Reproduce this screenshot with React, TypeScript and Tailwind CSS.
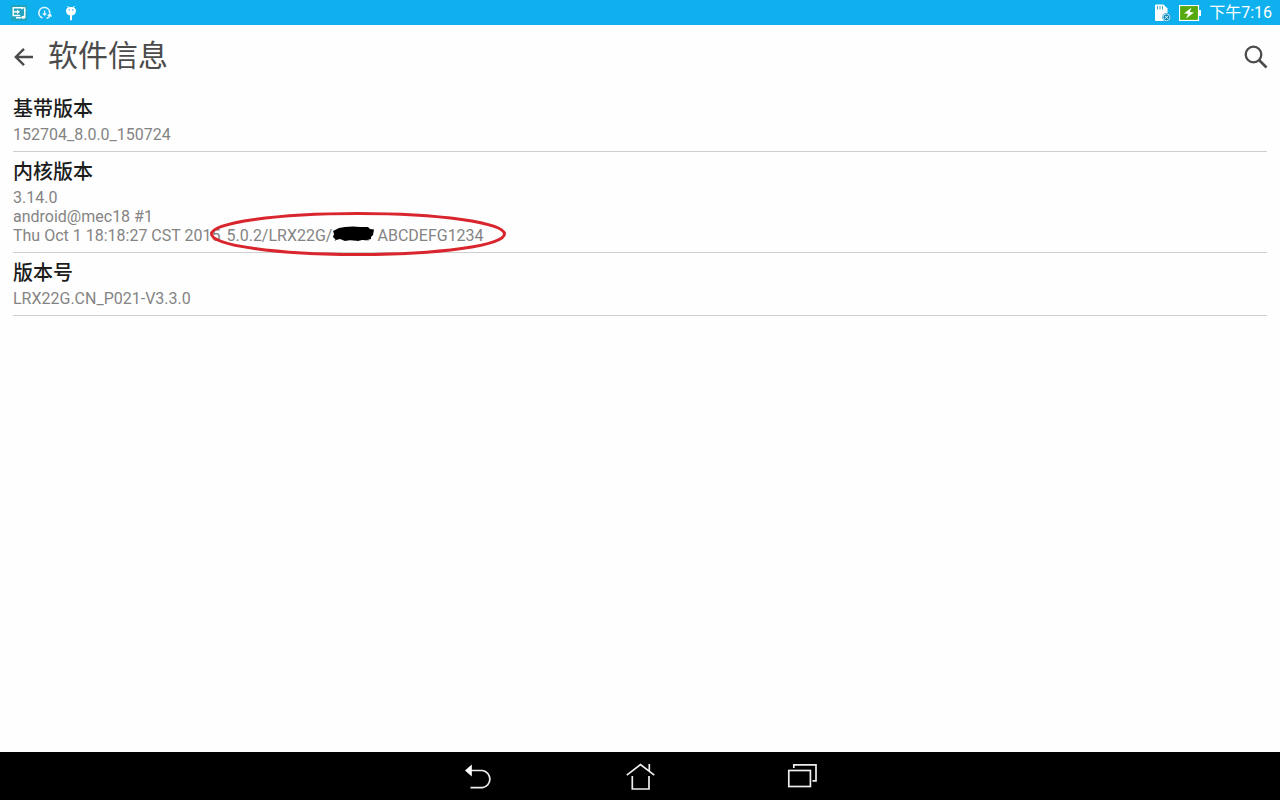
import React from 'react';

type InfoRowProps = { title: string; children: React.ReactNode };

function InfoRow({ title, children }: InfoRowProps) {
  return (
    <li className="border-b border-[#cfcfcf] py-[7px]">
      <h2 className="mb-[3px] text-[20px] leading-[26px] font-medium text-[#1c1c1c]">{title}</h2>
      <div className="text-base leading-[19px] text-[#848484]">{children}</div>
    </li>
  );
}

function StatusBar() {
  return (
    <div className="flex h-[25px] items-center justify-between bg-[#0eb0ee] pr-2 pl-[11px] text-white">
      <div className="flex items-center gap-2.5">
        <svg width="16" height="16" viewBox="0 0 16 16" fill="none" aria-hidden="true">
          <rect width="16" height="16" rx="1.5" fill="#20a4be" />
          <path d="M11 4.2V2.8H2.2V10.5H9.2M5 12.8H10M13.8 4.8V12" stroke="#fff" strokeWidth="1.4" />
          <path d="M11 2.8H13.8V6" stroke="#fff" strokeWidth="1.3" />
          <path d="M2.6 6.8H7" stroke="#fff" strokeWidth="1.5" />
          <path d="M6 4.4L9 6.8L6 9.2Z" fill="#fff" />
          <ellipse cx="12.3" cy="12.3" rx="2" ry="1.5" fill="#fff" />
        </svg>
        <svg width="16" height="16" viewBox="0 0 16 16" fill="none" stroke="#e4f6fe" aria-hidden="true">
          <path d="M5.5 13A5.4 5.4 0 1 1 12.7 8.3" strokeWidth="1.6" />
          <path d="M7.6 5.4V10M5.8 8.3L7.6 10.2L9.4 8.3" strokeWidth="1.2" />
          <path d="M9.5 13.2A4 4 0 0 0 13 9.8M10.7 10.8L13 9L14.5 11.6" strokeWidth="1.4" />
        </svg>
        <svg width="16" height="16" viewBox="0 0 16 16" fill="#fff" aria-hidden="true">
          <path d="M3 5.5C3 3.5 5 2 8 2S13 3.5 13 5.5C13 8.7 11 10.5 8 10.5S3 8.7 3 5.5Z" />
          <path d="M4.5 1L6 3M11.5 1L10 3" stroke="#fff" strokeWidth="1" />
          <path d="M7 10H9V15.2H7Z" />
          <circle cx="6.2" cy="5" r="0.7" fill="#0eb0ee" />
          <circle cx="9.8" cy="5" r="0.7" fill="#0eb0ee" />
        </svg>
      </div>
      <div className="flex items-center gap-2">
        <svg width="16" height="18" viewBox="0 0 16 18" fill="none" aria-hidden="true">
          <path d="M0 1.5Q0 0.5 1 0.5H8.5L12.5 4.5V16.5Q12.5 17 12 17H1Q0 17 0 16Z" fill="#fff" />
          <path d="M2.5 2V5.5M5 2V5.5M7.5 2V5.5" stroke="#3babce" strokeWidth="1" />
          <circle cx="11.5" cy="13.3" r="4.2" fill="#0788bb" />
          <circle cx="11.5" cy="13.3" r="3.5" stroke="#c9edfb" />
          <path d="M10 11.8L13 14.8M13 11.8L10 14.8" stroke="#fff" />
        </svg>
        <svg width="22" height="16" viewBox="0 0 22 16" fill="none" aria-hidden="true">
          <rect x="0.5" y="0.5" width="19" height="15" fill="#56a80f" stroke="#fff" strokeWidth="1.2" />
          <path d="M20 5H22V11H20Z" fill="#fff" />
          <path d="M12.5 2.5L5 8.6L9.2 8.8L7 13.5L15 7.4L10.8 7.1Z" fill="#fff" />
        </svg>
        <time className="text-base leading-6">下午7:16</time>
      </div>
    </div>
  );
}

function HighlightedBuild() {
  return (
    <span className="relative inline-block">
      5.0.2/LRX22G/
      <svg className="inline-block align-bottom" width="45" height="19" viewBox="0 0 45 19" aria-label="已涂抹">
        <path d="M3 15L5 11M18 14H23M32 14H37" stroke="#777" strokeWidth="1" />
        <path d="M1 5L7 2L13 1L21 0.5L28 1L36 1L38 3L42 3.5L41 9L39 11L39 13L35 14L30 14L26 15L19 14L13 15L8 13L4 14L1 11L2 8Z" fill="#000" />
      </svg>
      ABCDEFG1234
      <svg
        className="pointer-events-none absolute -top-3.5 -left-4"
        width="296"
        height="44"
        viewBox="0 0 296 44"
        fill="none"
        aria-hidden="true"
      >
        <ellipse cx="148" cy="22" rx="146.5" ry="20.5" stroke="#d9252d" strokeWidth="3" />
      </svg>
    </span>
  );
}

export default function App() {
  return (
    <div className="flex min-h-screen flex-col bg-[#fefefe] font-[Roboto,'Noto_Sans_CJK_SC',sans-serif]">
      <StatusBar />
      <header className="flex h-16 items-center px-3">
        <button type="button" aria-label="返回" className="mr-3">
          <svg width="24" height="24" viewBox="0 0 24 24" fill="none" stroke="#4b4b4b" strokeWidth="2.4">
            <path d="M21 12H4M12 3.8L3.8 12L12 20.2" />
          </svg>
        </button>
        <h1 className="pb-0.5 text-[30px] leading-10 text-[#4b4b4b]">软件信息</h1>
        <button type="button" aria-label="搜索" className="ml-auto">
          <svg width="24" height="24" viewBox="0 0 24 24" fill="none" stroke="#4b4b4b">
            <circle cx="9.5" cy="9.5" r="7.8" strokeWidth="2.3" />
            <path d="M15 15L22.5 22.5" strokeWidth="2.6" />
          </svg>
        </button>
      </header>
      <main className="flex-1 px-[13px]">
        <ul>
          <InfoRow title="基带版本">
            <p>152704_8.0.0_150724</p>
          </InfoRow>
          <InfoRow title="内核版本">
            <p>3.14.0</p>
            <p>android@mec18 #1</p>
            <p className="flex gap-1.5">
              <span>Thu Oct 1 18:18:27 CST 2015</span>
              <HighlightedBuild />
            </p>
          </InfoRow>
          <InfoRow title="版本号">
            <p>LRX22G.CN_P021-V3.3.0</p>
          </InfoRow>
        </ul>
      </main>
      <nav className="flex h-12 items-center justify-center gap-[130px] bg-black">
        <button type="button" aria-label="后退">
          <svg width="32" height="32" viewBox="0 0 32 32" fill="none" stroke="#eee" strokeWidth="1.7">
            <path d="M9 10.5H20.5A8.7 8.7 0 0 1 20.5 27.7H8.5" />
            <path d="M3 10.5L9.8 4.5V16.5Z" fill="#fff" stroke="none" />
          </svg>
        </button>
        <button type="button" aria-label="主屏幕">
          <svg width="32" height="32" viewBox="0 0 32 32" fill="none" stroke="#eee" strokeWidth="1.7">
            <path d="M2.8 15.2L16.5 4.5L30.3 15.2M25.3 4V11.5M8.3 16V29H25V16" />
          </svg>
        </button>
        <button type="button" aria-label="最近任务">
          <svg width="32" height="32" viewBox="0 0 32 32" fill="none" stroke="#eee" strokeWidth="1.7">
            <rect x="2.8" y="10.5" width="21.6" height="16" />
            <path d="M7.8 8V4.8H30V20.8H26.5" />
          </svg>
        </button>
      </nav>
    </div>
  );
}
